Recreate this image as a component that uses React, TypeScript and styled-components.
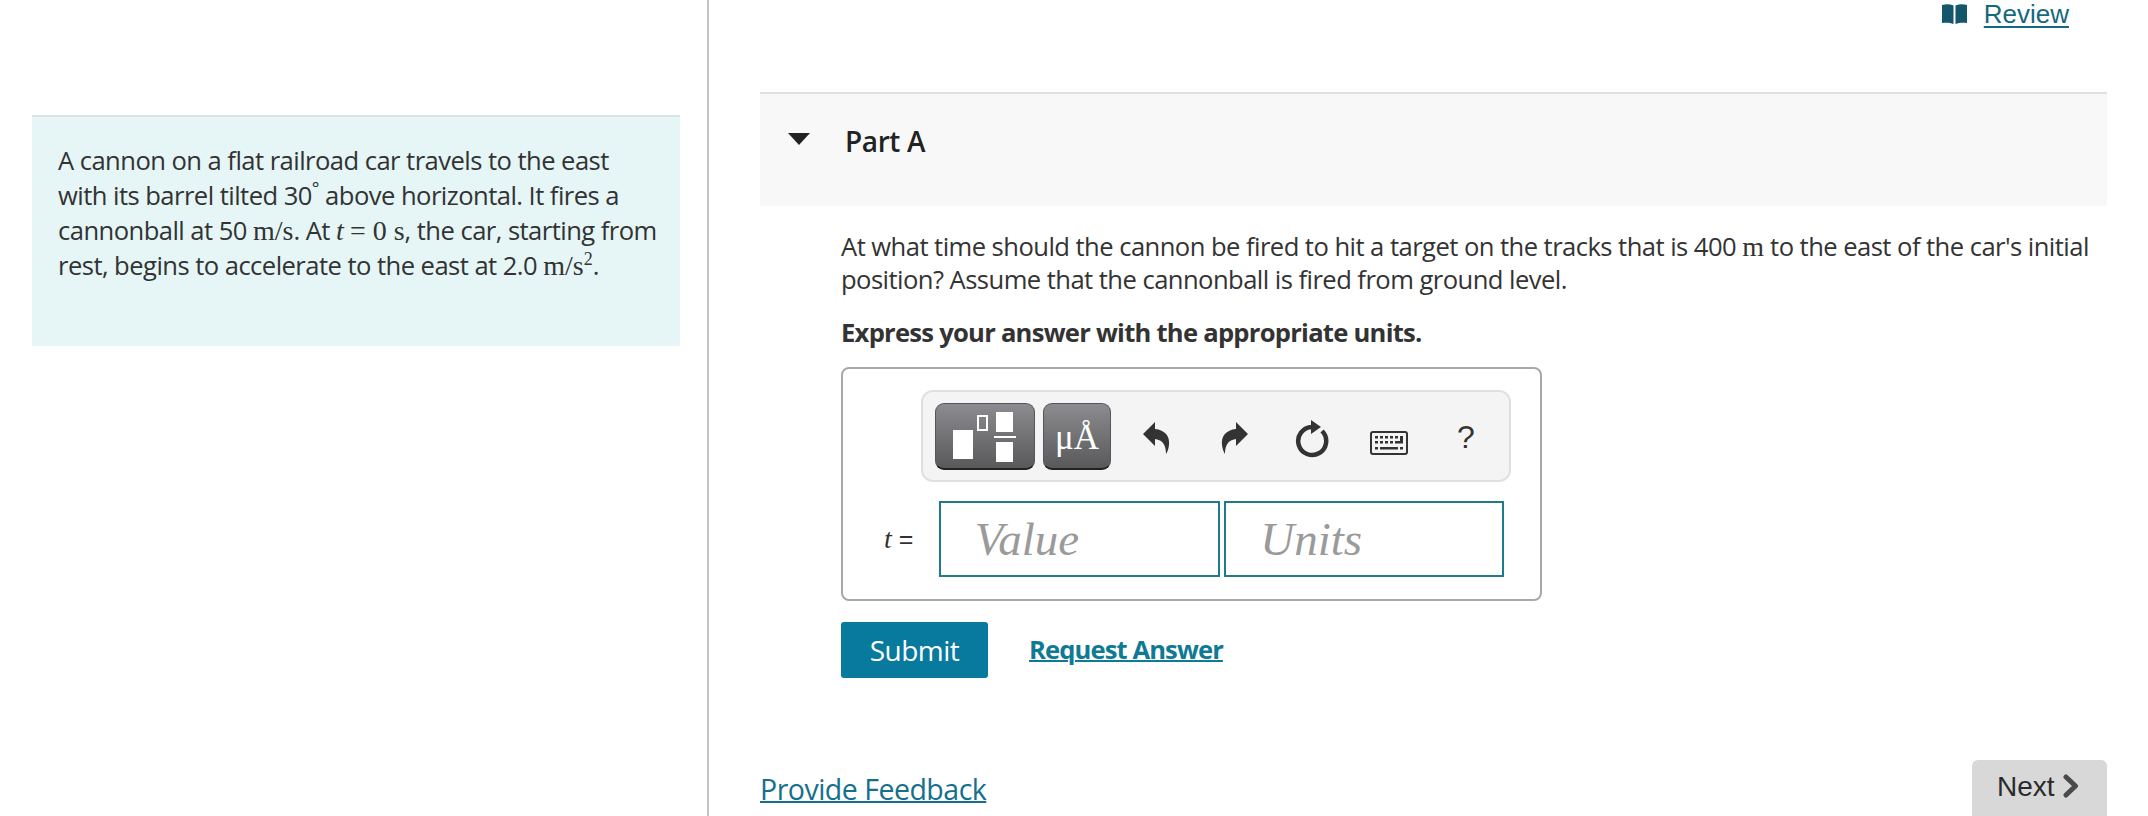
import React from "react";
import styled, { createGlobalStyle } from "styled-components";

const GlobalStyle = createGlobalStyle`
  html, body {
    margin: 0;
    padding: 0;
    background: #fff;
  }
  * {
    box-sizing: border-box;
  }
`;

const Page = styled.div`
  display: flex;
  width: 2148px;
  height: 816px;
  overflow: hidden;
  font-family: "Open Sans", "Noto Sans", sans-serif;
  color: #333;
`;

const LeftColumn = styled.div`
  width: 709px;
  flex: none;
  padding: 115px 27px 0 32px;
  border-right: 2px solid #c4c4c4;
`;

const IntroBox = styled.div`
  height: 231px;
  padding: 26px 20px 0 26px;
  background: #e6f6f7;
  border-top: 2px solid #d6e6e6;
  font-size: 25.6px;
  line-height: 35px;
  letter-spacing: -0.55px;
`;

const RightColumn = styled.div`
  flex: 1;
  padding: 0 41px 0 51px;
  display: flex;
  flex-direction: column;
`;

const ReviewRow = styled.div`
  height: 92px;
  padding: 0 38px 0 0;
  display: flex;
  justify-content: flex-end;
`;

const ReviewLink = styled.a`
  display: flex;
  height: 30px;
  align-items: center;
  font-family: "Liberation Sans", Arial, sans-serif;
  font-size: 26px;
  color: #14697c;
  border-bottom: 2px solid #14697c;
  border-bottom-color: transparent;
`;

const ReviewText = styled.span`
  margin-left: 9px;
  padding-left: 8px;
  text-decoration: underline;
  text-underline-offset: 3px;
  text-decoration-thickness: 2px;
`;

const PartHeader = styled.div`
  height: 114px;
  padding: 29px 0 0 28px;
  display: flex;
  align-items: flex-start;
  background: #f8f8f8;
  border-top: 2px solid #e0e0e0;
`;

const Caret = styled.div`
  width: 0;
  height: 0;
  margin-top: 10px;
  border-left: 11px solid transparent;
  border-right: 11px solid transparent;
  border-top: 12px solid #222;
`;

const PartTitle = styled.h2`
  margin: 0 0 0 35px;
  font-size: 28px;
  line-height: 36px;
  font-weight: 600;
  letter-spacing: -0.4px;
  color: #222;
`;

const PartBody = styled.div`
  padding: 24px 0 0 81px;
`;

const Question = styled.p`
  margin: 0;
  font-size: 25.6px;
  line-height: 33px;
  letter-spacing: -0.55px;
`;

const Instruction = styled.p`
  margin: 20px 0 0;
  font-size: 25.6px;
  line-height: 33px;
  font-weight: 700;
  letter-spacing: -0.75px;
`;

const AnswerCard = styled.div`
  width: 701px;
  height: 234px;
  margin-top: 18px;
  padding: 21px 32px 0 77px;
  border: 2px solid #a8a8a8;
  border-radius: 8px;
`;

const Toolbar = styled.div`
  width: 590px;
  height: 92px;
  margin-left: 1px;
  padding: 11px 0 0 12px;
  display: flex;
  align-items: flex-start;
  background: #f4f4f4;
  border: 2px solid #e0e0e0;
  border-radius: 12px;
`;

const PaletteButton = styled.div<{ $width: number }>`
  width: ${(p) => p.$width}px;
  height: 67px;
  margin-right: 8px;
  display: flex;
  align-items: center;
  justify-content: center;
  background: linear-gradient(#8c8c90, #59595b);
  border: 1px solid #55555a;
  border-bottom: 2px solid #222;
  border-radius: 9px;
  color: #fff;
`;

const UnitGlyph = styled.span`
  margin-top: 2px;
  font-family: "Liberation Serif", "Times New Roman", serif;
  font-size: 35px;
  line-height: 1;
`;

const ToolIcon = styled.svg<{ $left: number; $top: number }>`
  flex: none;
  margin: ${(p) => p.$top}px 0 0 ${(p) => p.$left}px;
  fill: #333;
`;

const HelpMark = styled.span`
  margin: 12px 0 0 49px;
  font-family: "Liberation Sans", Arial, sans-serif;
  font-size: 32px;
  line-height: 44px;
  color: #333;
`;

const InputRow = styled.div`
  display: flex;
  align-items: center;
  margin-top: 19px;
  margin-left: -57px;
`;

const InputLabel = styled.div`
  width: 78px;
  padding-left: 21px;
  font-family: "Liberation Sans", Arial, sans-serif;
  font-size: 25px;
  white-space: pre;
`;

const InputBox = styled.div<{ $width: number }>`
  width: ${(p) => p.$width}px;
  height: 76px;
  margin-right: 4px;
  padding-left: 34px;
  border: 2px solid #1f7a8c;
  font-family: "Liberation Serif", "Times New Roman", serif;
  font-style: italic;
  font-size: 47px;
  line-height: 72px;
  color: #9a9a9a;
`;

const ActionRow = styled.div`
  display: flex;
  align-items: center;
  margin-top: 21px;
`;

const SubmitButton = styled.button`
  width: 147px;
  height: 56px;
  padding: 0;
  background: #077a9e;
  border: none;
  border-radius: 3px;
  font-family: "Open Sans", sans-serif;
  font-size: 28px;
  letter-spacing: -0.5px;
  color: #fff;
`;

const RequestLink = styled.a`
  margin-left: 41px;
  margin-top: -2px;
  font-size: 25.6px;
  font-weight: 700;
  letter-spacing: -0.9px;
  color: #0f7a93;
  text-decoration: underline;
  text-decoration-thickness: 2px;
`;

const Footer = styled.div`
  margin-top: auto;
  height: 56px;
  display: flex;
  justify-content: space-between;
`;

const FeedbackLink = styled.a`
  margin-top: 11px;
  font-size: 28.5px;
  line-height: 36px;
  letter-spacing: -0.5px;
  color: #14708c;
  text-decoration: underline;
  text-decoration-thickness: 2px;
`;

const NextButton = styled.div`
  width: 135px;
  height: 62px;
  padding: 9px 0 0 25px;
  display: flex;
  align-items: flex-start;
  gap: 8px;
  background: #d8d8d8;
  border-radius: 6px;
  font-family: "Liberation Sans", Arial, sans-serif;
  font-size: 28px;
  line-height: 36px;
  color: #2a2a2a;
`;

const NextChevron = styled.svg`
  margin-top: 5px;
`;

const MathUnit = styled.span`
  font-family: "Liberation Serif", "Times New Roman", serif;
  font-size: 28px;
  letter-spacing: 0;
`;

const MathVar = styled(MathUnit)`
  font-style: italic;
`;

const Sup = styled.sup`
  font-size: 18px;
  line-height: 0;
`;

function App() {
  return (
    <Page>
      <GlobalStyle />
      <LeftColumn>
        <IntroBox>
          A cannon on a flat railroad car travels to the east with its barrel tilted 30<Sup>°</Sup> above
          horizontal. It fires a cannonball at 50 <MathUnit>m/s</MathUnit>. At <MathVar>t</MathVar>{" "}
          <MathUnit>= 0 s</MathUnit>, the car, starting from rest, begins to accelerate to the east at 2.0{" "}
          <MathUnit>
            m/s<Sup>2</Sup>
          </MathUnit>
          .
        </IntroBox>
      </LeftColumn>
      <RightColumn>
        <ReviewRow>
          <ReviewLink>
            <svg width="25" height="20" viewBox="0 0 25 20">
              <path d="M0 1 C4 0 8 0 11.5 1.5 V20 C8 18.5 4 18.5 0 19 Z" fill="#14566a" />
              <path d="M25 1 C21 0 17 0 13.5 1.5 V20 C17 18.5 21 18.5 25 19 Z" fill="#14566a" />
            </svg>
            <ReviewText>Review</ReviewText>
          </ReviewLink>
        </ReviewRow>
        <PartHeader>
          <Caret />
          <PartTitle>Part A</PartTitle>
        </PartHeader>
        <PartBody>
          <Question>
            At what time should the cannon be fired to hit a target on the tracks that is 400 <MathUnit>m</MathUnit> to
            the east of the car's initial position? Assume that the cannonball is fired from ground level.
          </Question>
          <Instruction>Express your answer with the appropriate units.</Instruction>
          <AnswerCard>
            <Toolbar>
              <PaletteButton $width={100}>
                <svg width="64" height="52" viewBox="0 0 64 52" fill="#fff">
                  <rect x="0" y="20" width="20" height="29" />
                  <rect x="25" y="6" width="9" height="14" fill="none" stroke="#fff" strokeWidth="2" />
                  <rect x="43" y="2" width="17" height="20" />
                  <rect x="41" y="26" width="22" height="2" />
                  <rect x="43" y="32" width="17" height="20" />
                </svg>
              </PaletteButton>
              <PaletteButton $width={68}>
                <UnitGlyph>μÅ</UnitGlyph>
              </PaletteButton>
              <ToolIcon $left={24} $top={19} width="27" height="32" viewBox="0 0 27 32">
                <path d="M0 12 L12 0 V7 C22 8 27 14 26 23 C25.5 27 24.5 30 23 32 C23 25 21 18 12 17 V24 Z" />
              </ToolIcon>
              <ToolIcon $left={51} $top={19} width="27" height="32" viewBox="0 0 27 32">
                <path d="M27 12 L15 0 V7 C5 8 0 14 1 23 C1.5 27 2.5 30 4 32 C4 25 6 18 15 17 V24 Z" />
              </ToolIcon>
              <ToolIcon $left={47} $top={17} width="34" height="38" viewBox="0 0 34 38">
                <path d="M17 7 A14 14 0 1 0 27 11" fill="none" stroke="#333" strokeWidth="4.5" />
                <path d="M16 0 L26 7 L16 14 Z" />
              </ToolIcon>
              <ToolIcon $left={41} $top={28} width="38" height="24" viewBox="0 0 38 24">
                <rect x="1" y="1" width="36" height="22" rx="2" fill="none" stroke="#333" strokeWidth="2" />
                <path d="M5 5h3v2.500h-3zM10 5h3v2.500h-3zM15 5h3v2.500h-3zM20 5h3v2.500h-3zM25 5h3v2.500h-3zM30 5h3v6h-3zM5 10h3v2.500h-3zM10 10h3v2.500h-3zM15 10h3v2.500h-3zM20 10h3v2.500h-3zM25 10h8v2.500h-8zM5 16h3v2.500h-3zM10 16h18v2.500h-18zM30 16h3v2.500h-3z" />
              </ToolIcon>
              <HelpMark>?</HelpMark>
            </Toolbar>
            <InputRow>
              <InputLabel>
                <MathVar>t</MathVar> =
              </InputLabel>
              <InputBox $width={292}>Value</InputBox>
              <InputBox $width={290}>Units</InputBox>
            </InputRow>
          </AnswerCard>
          <ActionRow>
            <SubmitButton>Submit</SubmitButton>
            <RequestLink>Request Answer</RequestLink>
          </ActionRow>
        </PartBody>
        <Footer>
          <FeedbackLink>Provide Feedback</FeedbackLink>
          <NextButton>
            Next
            <NextChevron width="16" height="24" viewBox="0 0 16 24">
              <path d="M3 3 L12.500 12 L3 21" fill="none" stroke="#4a4a4a" strokeWidth="5" strokeLinecap="round" strokeLinejoin="round" />
            </NextChevron>
          </NextButton>
        </Footer>
      </RightColumn>
    </Page>
  );
}

export default App;
